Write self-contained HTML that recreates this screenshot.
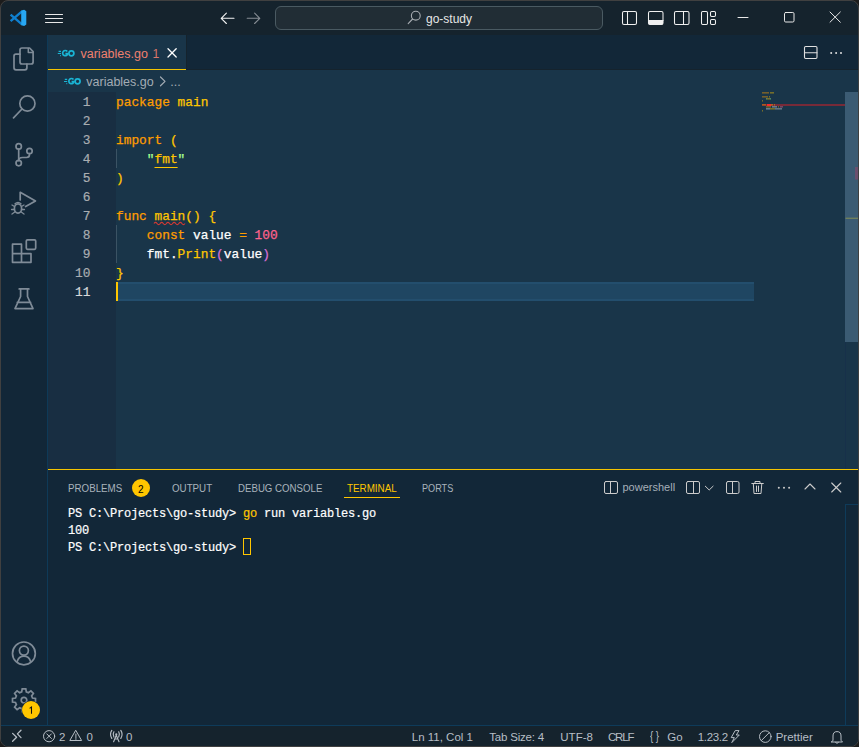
<!DOCTYPE html>
<html><head><meta charset="utf-8">
<style>
*{box-sizing:border-box;margin:0;padding:0}
html,body{width:859px;height:747px;overflow:hidden;background:#1c1c1c}
body{font-family:"Liberation Sans",sans-serif;position:relative}
.a{position:absolute}
.win{left:0;top:0;width:859px;height:747px;border:1px solid #404040;border-radius:8px;overflow:hidden;background:#15232d}
.mono{font-family:"Liberation Mono",monospace}
.t{position:absolute;white-space:pre;line-height:1}
#ov{position:absolute;left:0;top:0;width:859px;height:747px}
.code{position:absolute;left:116px;-webkit-text-stroke:0.25px currentColor;margin-top:1px;font-family:"Liberation Mono",monospace;font-size:12.83px;line-height:19px;height:19px;white-space:pre;color:#ffffff}
.ln{position:absolute;left:48px;-webkit-text-stroke:0.2px currentColor;margin-top:1px;width:42.4px;text-align:right;font-family:"Liberation Mono",monospace;font-size:12.83px;line-height:19px;height:19px;color:#a9adb1}
.k{color:#ff9d00}.y{color:#ffc600}.s{color:#a5ff90}.n{color:#ff628c}.p{color:#da70d6}
.term{position:absolute;left:68px;margin-top:2px;-webkit-text-stroke:0.2px currentColor;font-family:"Liberation Mono",monospace;font-size:12px;letter-spacing:-0.2px;line-height:17px;height:17px;white-space:pre;color:#ffffff}
.ptab{position:absolute;top:481px;transform-origin:0 0;font-size:11px;line-height:14px;color:#a9b3bc;white-space:pre}
.sb{position:absolute;top:730px;font-size:11.5px;line-height:14px;color:#b7bec5;white-space:pre}
</style></head><body>
<div class="a win">
  <!-- activity bar -->
  <div class="a" style="left:0;top:34px;width:46px;height:690px;background:#122738"></div>
  <div class="a" style="left:46px;top:34px;width:1px;height:690px;background:#0e3a58"></div>
  <!-- tab bar -->
  <div class="a" style="left:47px;top:34px;width:810px;height:35px;background:#122738"></div>
  <div class="a" style="left:47px;top:68px;width:810px;height:1px;background:#15232d"></div>
  <div class="a" style="left:47px;top:34px;width:138px;height:35px;background:#193549"></div>
  <div class="a" style="left:185px;top:34px;width:1px;height:35px;background:#15232d"></div>
  <div class="a" style="left:47px;top:68px;width:138px;height:1px;background:#f5c400"></div>
  <!-- breadcrumbs + editor -->
  <div class="a" style="left:47px;top:69px;width:810px;height:399px;background:#193549"></div>
  <!-- gutter -->
  <div class="a" style="left:47px;top:91px;width:68px;height:377px;background:#182e42"></div>
  <!-- current line highlight -->
  <div class="a" style="left:115px;top:281px;width:638px;height:19px;background:#1f4662;border-top:2px solid #234e6d;border-bottom:2px solid #234e6d"></div>
  <!-- indent guides -->
  <div class="a" style="left:115px;top:148px;width:1px;height:19px;background:#3b5364"></div>
  <div class="a" style="left:115px;top:224px;width:1px;height:38px;background:#3b5364"></div>
  <!-- scrollbar -->
  <div class="a" style="left:844px;top:91px;width:1px;height:377px;background:#17304a"></div>
  <div class="a" style="left:844px;top:91px;width:13px;height:250px;background:#3b5b73"></div>
  <!-- panel -->
  <div class="a" style="left:47px;top:468px;width:810px;height:1px;background:#f5c400"></div>
  <div class="a" style="left:47px;top:469px;width:810px;height:255px;background:#122738"></div>
  <div class="a" style="left:844px;top:503px;width:13px;height:221px;border-left:1px solid #0e3b5a;border-top:1px solid #0e3b5a"></div>
  <!-- status bar -->
  <div class="a" style="left:0;top:724px;width:857px;height:1px;background:#0e3b5a"></div>
  <div class="a" style="left:0;top:725px;width:857px;height:20px;background:#15232d"></div>
</div>

<!-- ===== TEXT ===== -->
<!-- title -->
<div class="a" style="left:275px;top:6px;width:328px;height:24px;border-radius:6px;background:#212d35;border:1px solid #4a5a62"></div>
<div class="t" style="left:426px;top:13px;font-size:12px;color:#e6e6e6">go-study</div>
<!-- tab -->
<div class="t" style="left:80.5px;top:47.8px;font-size:12.5px;color:#f0806f">variables.go</div>
<div class="t" style="left:152.5px;top:47.5px;font-size:12.2px;color:#d9766a">1</div>
<!-- breadcrumbs -->
<div class="t" style="left:86.3px;top:76px;font-size:12.5px;color:#a3acb4">variables.go</div>
<div class="t" style="left:170.3px;top:75.5px;font-size:12.5px;color:#a3acb4">...</div>

<!-- line numbers -->
<div class="ln" style="top:92px">1</div>
<div class="ln" style="top:111px">2</div>
<div class="ln" style="top:130px">3</div>
<div class="ln" style="top:149px">4</div>
<div class="ln" style="top:168px">5</div>
<div class="ln" style="top:187px">6</div>
<div class="ln" style="top:206px">7</div>
<div class="ln" style="top:225px">8</div>
<div class="ln" style="top:244px">9</div>
<div class="ln" style="top:263px">10</div>
<div class="ln" style="top:282px;color:#d6d8da">11</div>

<!-- code -->
<div class="code" style="top:92px"><span class="k">package</span> <span class="y">main</span></div>
<div class="code" style="top:130px"><span class="k">import</span> <span class="y">(</span></div>
<div class="code" style="top:149px">    <span class="s">"</span><span class="y" style="text-decoration:underline;text-underline-offset:3.5px">fmt</span><span class="s">"</span></div>
<div class="code" style="top:168px"><span class="y">)</span></div>
<div class="code" style="top:206px"><span class="k">func</span> <span class="y">main</span><span class="y">()</span> <span class="y">{</span></div>
<div class="code" style="top:225px">    <span class="k">const</span> value <span class="k">=</span> <span class="n">100</span></div>
<div class="code" style="top:244px">    fmt.<span class="y">Print</span><span class="p">(</span>value<span class="p">)</span></div>
<div class="code" style="top:263px"><span class="y">}</span></div>

<!-- panel tabs -->
<div class="ptab" style="left:68px;transform:scaleX(0.887)">PROBLEMS</div>
<div class="ptab" style="left:172px;transform:scaleX(0.887)">OUTPUT</div>
<div class="ptab" style="left:237.5px;transform:scaleX(0.879)">DEBUG CONSOLE</div>
<div class="ptab" style="left:346.6px;color:#ffc600;transform:scaleX(0.893)">TERMINAL</div>
<div class="ptab" style="left:422.3px;transform:scaleX(0.83)">PORTS</div>
<div class="a" style="left:343.7px;top:497px;width:56px;height:1px;background:#ffc600"></div>
<div class="a" style="left:132px;top:479px;width:18px;height:18px;border-radius:9px;background:#ffc600"></div>
<div class="t" style="left:138px;top:484.6px;font-size:10px;color:#000">2</div>
<div class="t" style="left:622.5px;top:482.3px;font-size:11px;color:#a6afb8">powershell</div>

<!-- terminal -->
<div class="term" style="top:504px">PS C:\Projects\go-study&gt; <span style="color:#ffc600">go</span> run variables.go</div>
<div class="term" style="top:521px">100</div>
<div class="term" style="top:538px">PS C:\Projects\go-study&gt; </div>
<div class="a" style="left:243px;top:538px;width:7.5px;height:17px;border:1px solid #ffc600"></div>

<!-- status bar -->
<div class="sb" style="left:59px">2</div>
<div class="sb" style="left:86.5px">0</div>
<div class="sb" style="left:126px">0</div>
<div class="sb" style="left:411.8px">Ln 11, Col 1</div>
<div class="sb" style="left:489.3px;letter-spacing:-0.2px">Tab Size: 4</div>
<div class="sb" style="left:560.3px">UTF-8</div>
<div class="sb" style="left:608px;letter-spacing:-1.2px">CRLF</div>
<div class="sb" style="left:649.5px;font-size:12px;top:729px;transform:scaleX(0.8);transform-origin:0 0">{ }</div>
<div class="sb" style="left:667.2px">Go</div>
<div class="sb" style="left:697.7px;letter-spacing:-0.3px">1.23.2</div>
<div class="sb" style="left:775.7px">Prettier</div>

<!-- ===== ICON OVERLAY ===== -->
<svg id="ov" width="859" height="747" viewBox="0 0 859 747" fill="none" stroke-linecap="round" stroke-linejoin="round">
  <!-- vscode logo -->
  <g>
    <path d="M22 11.4 L10.6 21.1 M22 24.4 L10.6 14.7" stroke="#0f80d0" stroke-width="2.4" stroke-linecap="butt"/>
    <path d="M21.2 10.6 L24.2 9.8 L26.3 11.2 L26.3 24.6 L24.2 26 L21.2 25.2 Z" fill="#27a7f3"/>
  </g>
  <!-- hamburger -->
  <path d="M45.5 14.5 H62.5 M45.5 18.5 H62.5 M45.5 22.5 H62.5" stroke="#e8e8e8" stroke-width="1.1"/>
  <!-- back / forward arrows -->
  <path d="M221.2 18.3 H234 M226.4 13.1 L221.2 18.3 L226.4 23.5" stroke="#f4f4f4" stroke-width="1.1"/>
  <path d="M247.2 18.3 H259.8 M254.6 13.1 L259.8 18.3 L254.6 23.5" stroke="#868d94" stroke-width="1.1"/>
  <!-- search box -->
  
  <circle cx="415.8" cy="15.7" r="4.4" stroke="#a8adb2" stroke-width="1.1"/>
  <path d="M412.6 19 L408.2 23.6" stroke="#a8adb2" stroke-width="1.1"/>
  <!-- layout icons -->
  <g stroke="#f0f0f0" stroke-width="1.05">
  <rect x="622.5" y="11.5" width="14" height="13" rx="1.5"/>
  <path d="M627.5 11.5 V24.5"/>
  <rect x="648.5" y="11.5" width="14.5" height="13" rx="1.5"/>
  <path d="M648.5 20.5 H663" stroke-width="1"/>
  <rect x="674.5" y="11.5" width="14.5" height="13" rx="1.5"/>
  <path d="M683.5 11.5 V24.5"/>
  <rect x="701.5" y="11.5" width="6" height="13" rx="1.2"/>
  <rect x="710.5" y="11.5" width="5" height="5" rx="1.2"/>
  <rect x="710.5" y="19.5" width="5" height="5" rx="1.2"/>
  </g>
  <rect x="648.5" y="20" width="14.5" height="4.5" rx="1" fill="#f0f0f0"/>
  <!-- window controls -->
  <path d="M738 17.5 H748" stroke="#e8e8e8" stroke-width="1"/>
  <rect x="784.5" y="12.5" width="9.5" height="9.5" rx="1.2" stroke="#e8e8e8" stroke-width="1"/>
  <path d="M830 12 L840.3 22.2 M840.3 12 L830 22.2" stroke="#e8e8e8" stroke-width="1"/>

  <!-- activity bar icons -->
  <g stroke="#7f8b97" stroke-width="1.7" stroke-linecap="round" stroke-linejoin="round">
    <!-- explorer -->
    <path d="M22 48 H29.6 L33.1 51.6 V62 Q33.1 64 31.1 64 H22 Q20 64 20 62 V50 Q20 48 22 48 Z"/>
    <path d="M28.3 48.4 V52.4 H32.8" stroke-width="1.5"/>
    <path d="M20 54.2 H16 Q14 54.2 14 56.2 V67.8 Q14 69.8 16 69.8 H24.9 Q26.9 69.8 26.9 67.8 V64"/>
    <!-- search -->
    <circle cx="27.4" cy="103.5" r="7.6"/>
    <path d="M22 109 L13.5 117.8"/>
    <!-- source control -->
    <circle cx="18.7" cy="146.4" r="2.7"/>
    <circle cx="18.7" cy="163.1" r="2.7"/>
    <circle cx="29.5" cy="151" r="2.7"/>
    <path d="M18.7 149.1 V160.4"/>
    <path d="M29.5 153.7 V154.5 Q29.5 157.5 26.5 157.5 H22.5 Q18.7 157.5 18.7 160.4"/>
    <!-- run & debug -->
    <path d="M20.2 200 V192.3 L35.5 200.9 L25.6 206.6"/>
    <ellipse cx="18" cy="208.5" rx="3.6" ry="4.6"/>
    <path d="M12 205 L14.5 206.5 M24 205 L21.5 206.5 M11.5 209.5 H14.5 M24.5 209.5 H21.5 M12 214 L14.8 212 M24 214 L21.2 212 M15 203.8 Q18 201 21 203.8" stroke-width="1.3"/>
    <!-- extensions -->
    <path d="M12.5 244.2 H21.5 V253.7 H31 V262.3 H12.5 Z M12.5 253.7 H21.5 V262.3" stroke-linejoin="round"/>
    <rect x="26.3" y="239.9" width="9.4" height="9.4" rx="1.2"/>
    <!-- testing -->
    <path d="M19.2 288.9 H28.9 M20.6 288.9 V296.5 L15 308.6 H33 L27.5 296.5 V288.9 M17.3 302.4 H30.6"/>
    <!-- accounts -->
    <circle cx="23.9" cy="653.4" r="11.4"/>
    <circle cx="23.9" cy="650.6" r="4.5"/>
    <path d="M17.2 661.6 Q18.6 656.2 23.9 656.2 Q29.2 656.2 30.6 661.6"/>
  </g>
  <!-- manage gear -->
  <g transform="translate(24 700)">
    <path id="gear" d="M-1.8 -11.2 H1.8 L2.3 -8.2 L4.4 -7.3 L6.9 -9.1 L9.4 -6.6 L7.6 -4.1 L8.5 -2 L11.5 -1.5 V2 L8.5 2.5 L7.6 4.6 L9.4 7.1 L6.9 9.6 L4.4 7.8 L2.3 8.7 L1.8 11.7 H-1.8 L-2.3 8.7 L-4.4 7.8 L-6.9 9.6 L-9.4 7.1 L-7.6 4.6 L-8.5 2.5 L-11.5 2 V-1.5 L-8.5 -2 L-7.6 -4.1 L-9.4 -6.6 L-6.9 -9.1 L-4.4 -7.3 L-2.3 -8.2 Z" stroke="#7f8b97" stroke-width="1.7" stroke-linejoin="miter"/>
    <circle cx="0" cy="0.2" r="2.8" stroke="#7f8b97" stroke-width="1.7"/>
  </g>
  <circle cx="31" cy="710" r="9.6" fill="#122738"/>
  <circle cx="31" cy="710" r="9" fill="#ffc600"/>
  <path d="M29.6 708.4 L31.5 707 V713.8" stroke="#111" stroke-width="1.05" stroke-linecap="butt" stroke-linejoin="miter"/>

  <!-- tab go icon -->
  <g id="goicon" stroke="#1ab4d4" stroke-width="1.7" fill="none" stroke-linecap="butt">
    <path d="M67.3 51.5 A2.6 2.6 0 1 0 67.8 53.6 H65.4"/>
    <circle cx="71.4" cy="53.3" r="2.5"/>
    <path d="M58.6 51.3 H61 M57.8 53.5 H61 M60.2 55.6 H61" stroke-width="1.2"/>
  </g>
  <g transform="translate(6.2 28)" stroke="#1ab4d4" stroke-width="1.7" fill="none" stroke-linecap="butt">
    <path d="M67.3 51.5 A2.6 2.6 0 1 0 67.8 53.6 H65.4"/>
    <circle cx="71.4" cy="53.3" r="2.5"/>
    <path d="M58.6 51.3 H61 M57.8 53.5 H61 M60.2 55.6 H61" stroke-width="1.2"/>
  </g>
  <!-- tab close -->
  <path d="M168 48.8 L176.2 57 M176.2 48.8 L168 57" stroke="#ffffff" stroke-width="1.3"/>
  <!-- breadcrumb chevron -->
  <path d="M160.5 77 L165 81.4 L160.5 85.8" stroke="#a3acb4" stroke-width="1.2"/>
  <!-- editor actions -->
  <rect x="804.5" y="46.5" width="12.5" height="12" rx="1.2" stroke="#e0e0e0" stroke-width="1.1"/>
  <path d="M804.5 52.7 H817" stroke="#e0e0e0" stroke-width="1.1"/>
  <g fill="#e0e0e0"><circle cx="831.2" cy="53" r="1"/><circle cx="836.1" cy="53" r="1"/><circle cx="841" cy="53" r="1"/></g>

  <!-- squiggle under main -->
  <path d="M154 223.5 q1.55 -2.3 3.1 0 t3.1 0 t3.1 0 t3.1 0 t3.1 0 t3.1 0 t3.1 0 t3.1 0 t3.1 0 t3.1 0" stroke="#cf3a34" stroke-width="1.15" stroke-linecap="butt"/>
  <!-- cursor -->
  <rect x="116" y="282" width="2" height="19" fill="#ffc600"/>

  <!-- minimap -->
  <g>
    <rect x="762" y="104" width="83" height="2" fill="#772a38"/>
    <rect x="762" y="92" width="7" height="1.6" fill="#ff9d00" opacity="0.4"/>
    <rect x="770" y="92" width="4" height="1.6" fill="#ffc600" opacity="0.4"/>
    <rect x="762" y="96" width="6" height="1.6" fill="#ff9d00" opacity="0.4"/>
    <rect x="769" y="96" width="1" height="1.6" fill="#ffc600" opacity="0.4"/>
    <rect x="766" y="98" width="1" height="1.6" fill="#a5ff90" opacity="0.4"/>
    <rect x="767" y="98" width="3" height="1.6" fill="#ffc600" opacity="0.4"/>
    <rect x="770" y="98" width="1" height="1.6" fill="#a5ff90" opacity="0.4"/>
    <rect x="762" y="100" width="1" height="1.6" fill="#ffc600" opacity="0.4"/>
    <rect x="762" y="104" width="4" height="1.6" fill="#ff9d00" opacity="0.4"/>
    <rect x="767" y="104" width="4" height="2" fill="#ff2a2a" opacity="0.95"/>
    <rect x="771" y="104" width="2" height="1.6" fill="#ffc600" opacity="0.4"/>
    <rect x="774" y="104" width="1" height="1.6" fill="#ffc600" opacity="0.4"/>
    <rect x="766" y="106" width="5" height="1.6" fill="#ff9d00" opacity="0.4"/>
    <rect x="772" y="106" width="5" height="1.6" fill="#e0e8f0" opacity="0.4"/>
    <rect x="778" y="106" width="1" height="1.6" fill="#ff9d00" opacity="0.4"/>
    <rect x="780" y="106" width="3" height="1.6" fill="#ff628c" opacity="0.4"/>
    <rect x="766" y="108" width="4" height="1.6" fill="#e0e8f0" opacity="0.4"/>
    <rect x="770" y="108" width="5" height="1.6" fill="#ffc600" opacity="0.4"/>
    <rect x="775" y="108" width="7" height="1.6" fill="#d0d8e0" opacity="0.4"/>
    <rect x="762" y="110" width="1" height="1.6" fill="#ffc600" opacity="0.4"/>
  </g>
  <rect x="845.5" y="217.6" width="12.5" height="1.4" fill="#6f7f5c"/>
  <rect x="855" y="167" width="3" height="12.5" fill="#6a4f6e"/>

  <!-- panel header icons -->
  <g stroke="#cccccc" stroke-width="1">
    <rect x="604.5" y="481.5" width="13" height="12" rx="1.5"/>
    <path d="M610.5 481.5 V493.5"/>
    <rect x="686.5" y="481.5" width="13" height="12" rx="1.5"/>
    <path d="M693.5 481.5 V493.5"/>
    <path d="M705.3 486.2 L709.2 490 L713.1 486.2"/>
    <rect x="726.5" y="481.5" width="12.5" height="12" rx="1.5"/>
    <path d="M732.5 481.5 V493.5"/>
    <path d="M751.8 483.5 H763.3 M755 483.5 V481.5 H760 V483.5 M753.3 483.5 L754 493.5 H761 L761.8 483.5 M756.5 486 V491.5 M758.5 486 V491.5"/>
    <path d="M805 489 L810 484 L815 489" stroke-width="1.1"/>
    <path d="M831.7 483 L840.8 492 M840.8 483 L831.7 492" stroke-width="1.1"/>
  </g>
  <g fill="#cccccc"><circle cx="778.8" cy="487.8" r="1"/><circle cx="784" cy="487.8" r="1"/><circle cx="789.1" cy="487.8" r="1"/></g>

  <!-- status bar icons -->
  <g stroke="#b7bec5" stroke-width="1">
    <path d="M12.6 733.4 L16.6 737.3 L12.6 741.3 M21 730.2 L17.4 733.9 L21 737.6" stroke-width="1.3"/>
    <circle cx="49.1" cy="736.2" r="5.6"/>
    <path d="M46.8 733.9 L51.4 738.5 M51.4 733.9 L46.8 738.5"/>
    <path d="M75.9 730.6 L81.6 740.5 H70.2 Z" stroke-linejoin="miter"/>
    <path d="M75.9 734 V737.6 M75.9 738.6 V739.4"/>
    <path d="M116.3 735.2 L113.6 741.8 M116.3 735.2 L119 741.8 M114.6 739 H118" stroke-width="1.1"/>
    <path d="M113.9 731.8 Q112.3 734.4 113.9 737 M118.7 731.8 Q120.3 734.4 118.7 737 M111.8 730.4 Q109.2 734.4 111.8 738.4 M120.8 730.4 Q123.4 734.4 120.8 738.4" stroke-width="1.2"/>
    <circle cx="116.3" cy="734.4" r="1.1" fill="#b7bec5" stroke="none"/>
    <path d="M735.6 730.6 H739 L736.3 735 H739.3 L731.8 742.6 L734.3 737.6 H731.6 Z" stroke-linejoin="round"/>
    <circle cx="765.3" cy="736.6" r="5.8"/>
    <path d="M761.3 740.6 L769.3 732.6"/>
    <path d="M833 740.3 V736 Q833 731.6 837 731.6 Q841 731.6 841 736 V740.3 L842.5 742 H831.5 Z M835.5 742.5 Q837 744.5 838.5 742.5"/>
  </g>
</svg>
</body></html>
